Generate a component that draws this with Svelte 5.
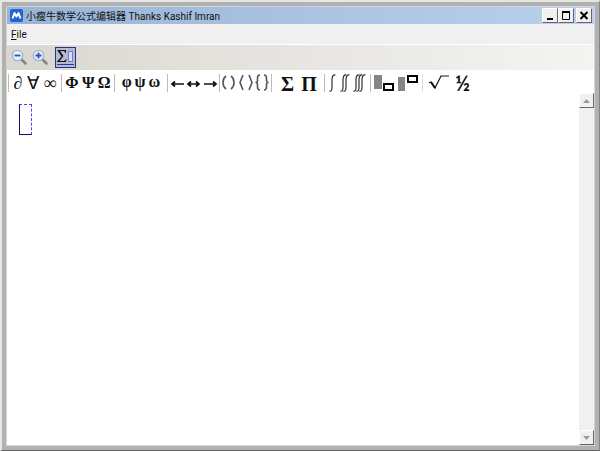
<script>
  const groups = [
    { name: 'relations', kind: 'serif', items: ['∂', '∀', '∞'] },
    { name: 'greek-upper', kind: 'greek', items: ['Φ', 'Ψ', 'Ω'] },
    { name: 'greek-lower', kind: 'lower', items: ['φ', 'ψ', 'ω'] },
    { name: 'arrows', kind: 'arrows', items: ['left', 'both', 'right'] },
    { name: 'brackets', kind: 'brackets', items: ['round', 'angle', 'curly'] },
    { name: 'sums', kind: 'large', items: ['Σ', 'Π'] },
    { name: 'integrals', kind: 'integrals', items: [1, 2, 3] },
    { name: 'scripts', kind: 'scripts', items: ['sub', 'sup'] },
    { name: 'roots', kind: 'roots', items: ['root', '½'] }
  ];

  const arrowPaths = {
    left: 'M2 9H14M5 6.5L2 9L5 11.5',
    both: 'M2 9H13M5 6.5L2 9L5 11.5M10 6.5L13 9L10 11.5',
    right: 'M1 9H13M10 6.5L13 9L10 11.5'
  };

  const bracketPaths = {
    round: 'M5 2C1 5 1 12 5 15M10 2C14 5 14 12 10 15',
    angle: 'M5 1L2 8.5L5 16M11 1L14 8.5L11 16',
    curly: 'M6 1Q3.5 1 3.5 4V6.5Q3.5 8.5 1.5 8.5Q3.5 8.5 3.5 10.5V13Q3.5 16 6 16M10 1Q12.5 1 12.5 4V6.5Q12.5 8.5 14.5 8.5Q12.5 8.5 12.5 10.5V13Q12.5 16 10 16'
  };

  let formula = '';
  let palette = true;
</script>

<svelte:head>
  <title>小瘦牛数学公式编辑器</title>
</svelte:head>

<div class="window">
  <header class="titlebar">
    <svg class="logo" width="13" height="13" viewBox="0 0 13 13" aria-hidden="true">
      <rect width="13" height="13" rx="2" fill="#2363d2" />
      <path d="M2.5 9.5L4.5 4L6.5 7.5L8.5 4L10.5 9.5" fill="none" stroke="#fff" stroke-width="2" stroke-linejoin="round" />
    </svg>
    <span class="title">小瘦牛数学公式编辑器 Thanks Kashif Imran</span>
    <div class="controls">
      <button aria-label="Minimize">
        <svg width="14" height="13" viewBox="0 0 14 13"><path d="M4 10H10" stroke="#000" stroke-width="2" /></svg>
      </button>
      <button aria-label="Maximize">
        <svg width="14" height="13" viewBox="0 0 14 13"><path d="M3.5 3V10.5H10.5V3M3 3H11" fill="none" stroke="#000" /><path d="M3 3H11" stroke="#000" stroke-width="2" /></svg>
      </button>
      <button class="close" aria-label="Close">
        <svg width="14" height="13" viewBox="0 0 14 13"><path d="M3.5 3L10.5 10M10.5 3L3.5 10" stroke="#000" stroke-width="2" /></svg>
      </button>
    </div>
  </header>

  <nav class="menubar">
    <button><u>F</u>ile</button>
  </nav>

  <div class="toolbar">
    {#each ['out', 'in'] as zoom}
      <button class="tool" aria-label="Zoom {zoom}">
        <svg width="17" height="17" viewBox="0 0 17 17">
          <path d="M10.5 10.5L14.5 14.5" stroke="#85857f" stroke-width="2.5" stroke-linecap="round" />
          <circle cx="6.5" cy="6.5" r="5.2" fill="#e9f0fd" stroke="#9fb4da" stroke-width="1.3" />
          <path d={zoom === 'in' ? 'M3.5 6.5H9.5M6.5 3.5V9.5' : 'M3.5 6.5H9.5'} stroke="#3057a4" stroke-width="1.8" />
        </svg>
      </button>
    {/each}
    <button
      class="tool toggle"
      class:active={palette}
      aria-pressed={palette}
      aria-label="Symbols"
      on:click={() => (palette = !palette)}
    >
      <svg width="19" height="19" viewBox="0 0 19 19">
        <path d="M1.5 2H10V5H9.5Q9 3 7 3H4L7.5 8L3.5 13H7.5Q9.5 13 10 11H10.5L10 14H1V13.5L5.5 8.5L1.5 2.5Z" fill="#111" />
        <rect x="12.5" y="3.5" width="4" height="10" fill="#dcdcf6" stroke="#7777e8" />
        <path d="M1 16.5H18" stroke="#3434a0" />
      </svg>
    </button>
  </div>

  {#if palette}
    <div class="palette">
      {#each groups as group}
        <div class="group {group.kind}">
          {#each group.items as item}
            <button aria-label="{group.name} {item}">
              {#if group.kind === 'arrows'}
                <svg width="15" height="16" viewBox="0 0 15 16"><path d={arrowPaths[item]} fill="none" stroke="#111" stroke-width="1.7" /></svg>
              {:else if group.kind === 'brackets'}
                <svg width="16" height="18" viewBox="0 0 16 18"><path d={bracketPaths[item]} fill="none" stroke="#555" stroke-width="1.6" /></svg>
              {:else if group.kind === 'integrals'}
                <svg width={4 + item * 3} height="20" viewBox="0 0 {4 + item * 3} 20">
                  {#each Array(item) as _, i}
                    <path d="M{i * 3 + 0.5} 18Q{i * 3 + 3} 19 {i * 3 + 3} 14V6Q{i * 3 + 3.5} 1 {i * 3 + 6.5} 2" fill="none" stroke="#333" stroke-width="1.2" />
                  {/each}
                </svg>
              {:else if item === 'sub'}
                <svg width="21" height="18" viewBox="0 0 21 18">
                  <rect x="0" y="1" width="8" height="14" fill="#858585" />
                  <rect x="10" y="10" width="9" height="6" fill="#fff" stroke="#000" stroke-width="2" />
                </svg>
              {:else if item === 'sup'}
                <svg width="21" height="18" viewBox="0 0 21 18">
                  <rect x="0" y="3" width="7" height="14" fill="#858585" />
                  <rect x="10" y="2" width="9" height="6" fill="#fff" stroke="#000" stroke-width="2" />
                </svg>
              {:else if item === 'root'}
                <svg width="22" height="18" viewBox="0 0 22 18">
                  <path d="M1 9L3 8L7 14L13 2H21" fill="none" stroke="#111" stroke-width="1.2" />
                  <path d="M3 8L7 14" stroke="#111" stroke-width="2" />
                </svg>
              {:else}
                {item}
              {/if}
            </button>
          {/each}
        </div>
      {/each}
    </div>
  {/if}

  <main class="workspace">
    <div class="canvas">
      <input class="formula" aria-label="Formula" bind:value={formula} />
    </div>
    <div class="scrollbar">
      <button aria-label="Scroll up">
        <svg width="7" height="4" viewBox="0 0 7 4"><path d="M0 4L3.5 0L7 4Z" fill="#999" /></svg>
      </button>
      <button aria-label="Scroll down">
        <svg width="7" height="4" viewBox="0 0 7 4"><path d="M0 0H7L3.5 4Z" fill="#999" /></svg>
      </button>
    </div>
  </main>
</div>

<style>
  :global(body) {
    margin: 0;
    background: #b1b1b1;
  }

  .window {
    display: flex;
    flex-direction: column;
    box-sizing: border-box;
    min-height: 100vh;
    padding: 5px;
    border: 2px solid #e6e6e3;
    border-right: 1px solid #858585;
    border-bottom: 1px solid #666;
    background: #fff;
    box-shadow: inset 0 0 0 4px #b1b1b1, inset 0 0 0 5px #d5d5d5;
    font-family: Roboto, "Noto Sans CJK SC", sans-serif;
    font-size: 10px;
    color: #111;
  }

  button {
    display: flex;
    align-items: center;
    justify-content: center;
    margin: 0;
    padding: 0;
    border: 0;
    background: none;
    color: inherit;
    font: inherit;
  }

  svg {
    display: block;
    flex: none;
  }

  .titlebar {
    display: flex;
    align-items: center;
    height: 17px;
    padding: 0 2px 0 3px;
    background: linear-gradient(90deg, #98b4d6, #bad1ed);
  }

  .title {
    flex: 1;
    margin-left: 3px;
    white-space: nowrap;
  }

  .controls {
    display: flex;
  }

  .controls button,
  .scrollbar button {
    box-sizing: border-box;
    height: 15px;
    border: 1px solid #fff;
    border-right-color: #666;
    border-bottom-color: #666;
    background: #f0f0f0;
  }

  .controls button {
    width: 16px;
  }

  .controls .close {
    margin-left: 2px;
  }

  .menubar {
    display: flex;
    align-items: center;
    height: 20px;
    padding: 0 4px;
    border-bottom: 1px solid #fff;
    background: #f0f0f0;
  }

  .toolbar {
    display: flex;
    align-items: center;
    height: 25px;
    padding: 0 2px;
    background: linear-gradient(90deg, #d9d7d0, #f4f4f3);
  }

  .tool {
    box-sizing: border-box;
    width: 21px;
    height: 21px;
  }

  .toggle {
    margin-left: 4px;
  }

  .toggle.active {
    border: 1px solid #25347b;
    background: #b3bbd1;
  }

  .palette {
    display: flex;
    align-items: center;
    box-sizing: border-box;
    height: 23px;
    padding: 2px 0 0 1px;
    font-family: "Liberation Serif", serif;
    line-height: 18px;
  }

  .group {
    display: flex;
    align-items: center;
    justify-content: space-evenly;
    box-sizing: border-box;
    width: 53px;
    height: 18px;
    border-left: 1px solid #bbb;
  }

  .serif {
    font-size: 18px;
  }

  .greek {
    font-size: 16px;
    font-weight: bold;
  }

  .lower {
    padding: 0 4px 2px 4px;
    font-size: 16px;
    font-weight: bold;
  }

  .arrows {
    width: 52px;
  }

  .brackets {
    width: 52px;
  }

  .large {
    padding: 2px 0 0 2px;
    font-size: 20px;
    font-weight: bold;
  }

  .integrals {
    width: 46px;
  }

  .scripts {
    width: 52px;
  }

  .roots {
    border-left-color: #ddd;
    font-family: Lato, sans-serif;
    font-size: 20px;
    font-weight: bold;
  }

  .workspace {
    display: flex;
    flex: 1;
  }

  .canvas {
    flex: 1;
    padding: 11px 12px;
  }

  .formula {
    display: block;
    box-sizing: border-box;
    width: 13px;
    height: 31px;
    padding: 0;
    border: 1px dashed #4545ff;
    border-left: 1px solid #111166;
    border-bottom: 1px solid #111166;
    outline: none;
    background: #fff;
  }

  .scrollbar {
    display: flex;
    flex-direction: column;
    justify-content: space-between;
    width: 15px;
    background: #f0f0f0;
  }
</style>
